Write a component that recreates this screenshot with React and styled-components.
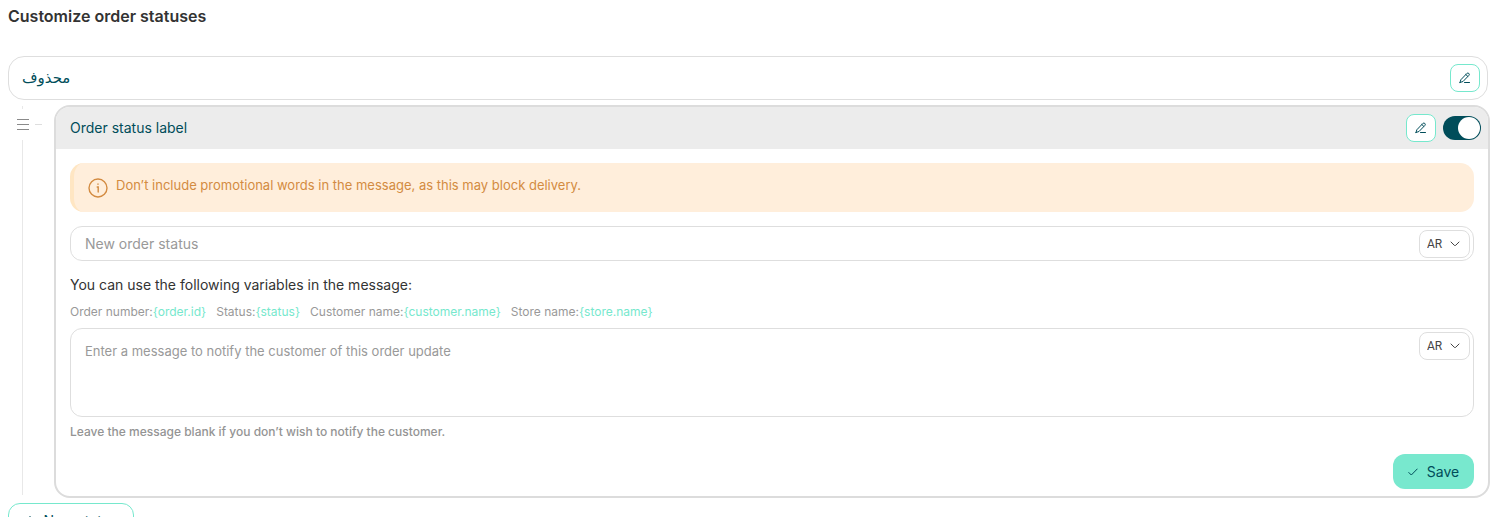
import React from "react";
import styled, { createGlobalStyle } from "styled-components";

const GlobalStyle = createGlobalStyle`
  *, *::before, *::after { box-sizing: border-box; }
  body {
    margin: 0;
    background: #fff;
    color: #333;
    font-family: Inter, "Noto Sans", "DejaVu Sans", sans-serif;
    font-size: 14px;
    line-height: 20px;
  }
  button, input, select, textarea { font: inherit; }
`;

const Page = styled.main`
  padding: 6px 10px 20px 8px;
`;

const Title = styled.h1`
  margin: 0 0 30px;
  font-size: 16px;
  line-height: 20px;
  font-weight: 600;
`;

const StatusRow = styled.section`
  display: flex;
  align-items: center;
  justify-content: space-between;
  height: 44px;
  margin-right: 2px;
  padding: 0 7px 0 13px;
  border: 1px solid #dedede;
  border-radius: 16px;
`;

const StatusName = styled.span`
  color: #004d5a;
  &:lang(ar) { font-size: 15px; }
`;

const Nested = styled.div`
  display: flex;
  margin-top: 5px;
`;

const Rail = styled.div`
  display: flex;
  flex-direction: column;
  width: 46px;
  flex: none;
  padding: 1px 0 3px;
`;

const Line = styled.span`
  width: 1px;
  margin-left: 14px;
  background: #e8e8e8;
  ${(p) => (p.$grow ? "flex: 1;" : "height: 3px;")}
`;

const Handle = styled.button`
  display: flex;
  align-items: center;
  gap: 6px;
  height: 31px;
  padding: 0 0 0 9px;
  border: 0;
  background: none;
  color: #8a8a8a;
`;

const Dash = styled.span`
  width: 7px;
  height: 1px;
  background: #dedede;
`;

const Card = styled.section`
  flex: 1;
  min-width: 0;
  border: 2px solid #dcdcdc;
  border-radius: 16px;
  overflow: hidden;
`;

const CardHeader = styled.header`
  display: flex;
  align-items: center;
  justify-content: space-between;
  height: 42px;
  padding: 0 7px 0 14px;
  background: #ececec;
`;

const Actions = styled.div`
  display: flex;
  align-items: center;
  gap: 7px;
`;

const EditButton = styled.button`
  display: flex;
  align-items: center;
  justify-content: center;
  width: 30px;
  height: 28px;
  padding: 0;
  border: 1px solid #76e8cd;
  border-radius: 8px;
  background: #fff;
  color: #004d5a;
`;

const Switch = styled.input`
  appearance: none;
  display: flex;
  justify-content: flex-end;
  width: 38px;
  height: 24px;
  margin: 0;
  padding: 1px;
  border-radius: 12px;
  background: #004d5a;
  &::before {
    content: "";
    width: 22px;
    height: 22px;
    border-radius: 50%;
    background: #fff;
  }
  &:not(:checked) {
    justify-content: flex-start;
    background: #bbb;
  }
`;

const CardBody = styled.form`
  display: flex;
  flex-direction: column;
  padding: 14px 14px 7px;
`;

const Alert = styled.div`
  display: flex;
  align-items: center;
  gap: 8px;
  height: 49px;
  padding: 0 14px;
  border-left: 4px solid #ffe6c3;
  border-radius: 14px;
  background: #ffeedb;
  color: #d38b41;
  font-size: 13px;
`;

const AlertText = styled.p`
  margin: 0;
  padding-bottom: 5px;
`;

const Field = styled.div`
  display: flex;
  align-items: ${(p) => (p.$tall ? "flex-start" : "center")};
  height: ${(p) => (p.$tall ? "89px" : "35px")};
  margin-top: ${(p) => (p.$tall ? "6px" : "14px")};
  padding: 3px;
  border: 1px solid #dedede;
  border-radius: 12px;
`;

const TextInput = styled.input`
  flex: 1;
  min-width: 0;
  padding: 0 11px;
  border: 0;
  outline: 0;
  background: none;
  font-size: 14px;
  &::placeholder { color: #999; }
`;

const TextArea = styled.textarea`
  flex: 1;
  align-self: stretch;
  min-width: 0;
  padding: 9px 11px;
  border: 0;
  outline: 0;
  resize: none;
  background: none;
  font-size: 13px;
  &::placeholder { color: #999; }
`;

const LangBox = styled.div`
  display: grid;
  align-items: center;
  width: 51px;
  height: 28px;
  flex: none;
  border: 1px solid #dedede;
  border-radius: 8px;
  > * { grid-area: 1 / 1; }
  svg { justify-self: end; margin-right: 9px; pointer-events: none; }
`;

const LangSelect = styled.select`
  appearance: none;
  width: 100%;
  height: 100%;
  padding: 0 0 0 7px;
  border: 0;
  outline: 0;
  background: none;
  color: #444;
  font-family: Roboto, sans-serif;
  font-size: 12px;
`;

const Hint = styled.p`
  margin: 14px 0 0;
  font-size: 14px;
`;

const Variables = styled.div`
  display: flex;
  flex-wrap: wrap;
  gap: 10px;
  margin-top: 7px;
  color: #999;
  font-size: 12px;
`;

const Token = styled.span`
  color: #76e8cd;
`;

const Note = styled.p`
  margin: 5px 0 0;
  color: #949494;
  font-size: 12px;
  font-weight: 500;
`;

const SaveButton = styled.button`
  display: flex;
  align-items: center;
  justify-content: center;
  gap: 9px;
  align-self: flex-end;
  width: 81px;
  height: 35px;
  margin-top: 12px;
  padding: 0;
  border: 0;
  border-radius: 12px;
  background: #78e8ce;
  color: #004d5a;
`;

const NewButton = styled.button`
  display: flex;
  align-items: center;
  justify-content: center;
  gap: 9px;
  width: 126px;
  height: 35px;
  margin-top: 5px;
  padding: 0;
  border: 1px solid #76e8cd;
  border-radius: 12px;
  background: #fff;
  color: #004d5a;
`;

const PencilIcon = () => (
  <svg width="12" height="12" viewBox="0 0 12 12" fill="none" stroke="currentColor" strokeLinejoin="round" strokeLinecap="round" aria-hidden="true">
    <path d="M1 10.5 1.8 7.8 7.8 1.5Q8.8.6 9.8 1.4T9.9 3.4L4 9.5 1 10.5ZM6.8 2.5 8.8 4.4M5.5 10.5H10.5" />
  </svg>
);

const ChevronIcon = () => (
  <svg width="10" height="6" viewBox="0 0 10 6" fill="none" stroke="#444" strokeLinecap="round" aria-hidden="true">
    <path d="M1 1 4.3 4.3Q5 5 5.7 4.3L9 1" />
  </svg>
);

const InfoIcon = () => (
  <svg width="20" height="20" viewBox="0 0 20 20" fill="none" stroke="currentColor" strokeWidth="1.4" strokeLinecap="round" aria-hidden="true">
    <circle cx="10" cy="10" r="9" />
    <path d="M9.2 9H10.2V14M10 6V6.3" />
  </svg>
);

const Language = ({ label }) => (
  <LangBox>
    <LangSelect aria-label={label} defaultValue="AR">
      <option>AR</option>
      <option>EN</option>
    </LangSelect>
    <ChevronIcon />
  </LangBox>
);

const variables = [
  ["Order number:", "{order.id}"],
  ["Status:", "{status}"],
  ["Customer name:", "{customer.name}"],
  ["Store name:", "{store.name}"],
];

export default function App() {
  return (
    <>
      <GlobalStyle />
      <Page>
        <Title>Customize order statuses</Title>
        <StatusRow>
          <StatusName lang="ar" dir="rtl">محذوف</StatusName>
          <EditButton type="button" aria-label="Edit"><PencilIcon /></EditButton>
        </StatusRow>
        <Nested>
          <Rail>
            <Line />
            <Handle type="button" aria-label="Reorder">
              <svg width="12" height="12" viewBox="0 0 12 12" stroke="currentColor" aria-hidden="true">
                <path d="M0 .5H12M0 5.5H12M0 10.5H12" />
              </svg>
              <Dash />
            </Handle>
            <Line $grow />
          </Rail>
          <Card>
            <CardHeader>
              <StatusName>Order status label</StatusName>
              <Actions>
                <EditButton type="button" aria-label="Edit"><PencilIcon /></EditButton>
                <Switch type="checkbox" role="switch" aria-label="Enabled" defaultChecked />
              </Actions>
            </CardHeader>
            <CardBody>
              <Alert role="note">
                <InfoIcon />
                <AlertText>Don’t include promotional words in the message, as this may block delivery.</AlertText>
              </Alert>
              <Field>
                <TextInput aria-label="New order status" placeholder="New order status" />
                <Language label="Status language" />
              </Field>
              <Hint>You can use the following variables in the message:</Hint>
              <Variables>
                {variables.map(([name, token]) => (
                  <span key={token}>{name}<Token>{token}</Token></span>
                ))}
              </Variables>
              <Field $tall>
                <TextArea aria-label="Message" placeholder="Enter a message to notify the customer of this order update" />
                <Language label="Message language" />
              </Field>
              <Note>Leave the message blank if you don’t wish to notify the customer.</Note>
              <SaveButton type="button">
                <svg width="10" height="8" viewBox="0 0 10 8" fill="none" stroke="currentColor" strokeLinecap="round" aria-hidden="true">
                  <path d="M.8 4.5 3.3 7 9.2 1" />
                </svg>
                Save
              </SaveButton>
            </CardBody>
          </Card>
        </Nested>
        <NewButton type="button">
          <svg width="10" height="10" viewBox="0 0 10 10" stroke="currentColor" aria-hidden="true">
            <path d="M5 0V10M0 5H10" />
          </svg>
          New status
        </NewButton>
      </Page>
    </>
  );
}
